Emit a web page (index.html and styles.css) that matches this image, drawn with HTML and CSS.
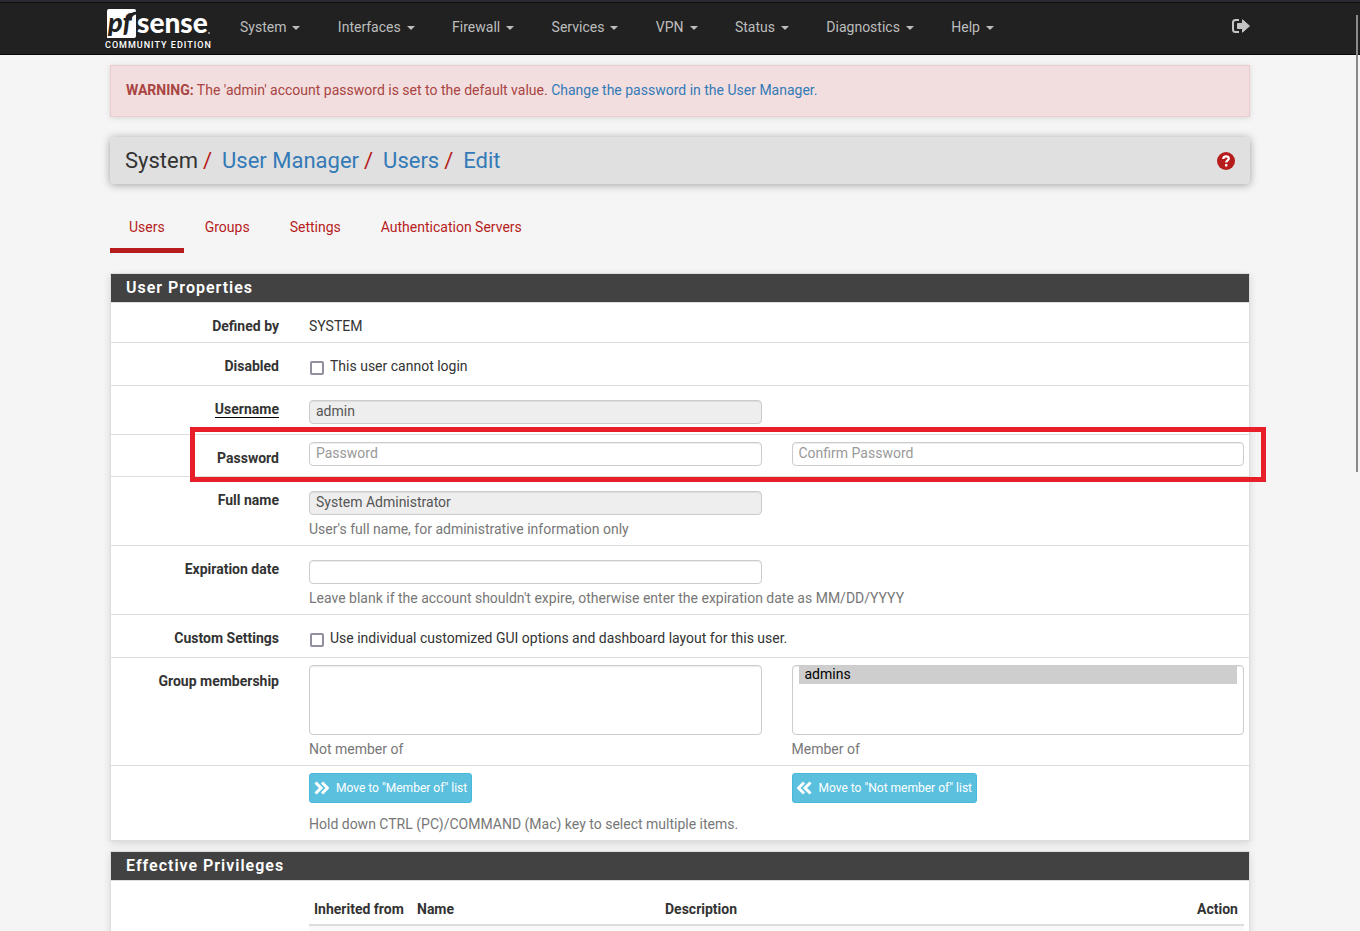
FILE: index.html
```html
<!DOCTYPE html>
<html lang="en">
<head>
<meta charset="utf-8">
<title>System: User Manager: Users: Edit</title>
<link rel="stylesheet" href="styles.css">
</head>
<body>
<header class="topbar">
  <div class="container topbar-inner">
    <a class="brand" href="#" aria-label="pfSense Community Edition">
      <svg class="brand-logo" width="106" height="36" viewBox="0 -4 106 36">
        <path fill="#fff" d="M2 0H27Q29 0 29 2V27Q29 29 27 29H0V2Q0 0 2 0Z"/>
        <text class="logo-pf" x="1" y="23">pf</text>
        <path fill="none" stroke="#212121" stroke-width="3" d="M23 10Q24 4 30 4"/>
        <text class="logo-sense" x="30" y="24">sense</text>
        <circle cx="102" cy="24" r="1" fill="#aaa"/>
      </svg>
      <span class="brand-edition">COMMUNITY EDITION</span>
    </a>
    <nav class="menu">
      <a href="#">System<i class="caret"></i></a>
      <a href="#">Interfaces<i class="caret"></i></a>
      <a href="#">Firewall<i class="caret"></i></a>
      <a href="#">Services<i class="caret"></i></a>
      <a href="#">VPN<i class="caret"></i></a>
      <a href="#">Status<i class="caret"></i></a>
      <a href="#">Diagnostics<i class="caret"></i></a>
      <a href="#">Help<i class="caret"></i></a>
    </nav>
    <a class="logout" href="#" aria-label="Logout">
      <svg width="18" height="14" viewBox="0 0 18 14"><path fill="none" stroke="#c4c4c4" stroke-width="2" d="M7 1H3.500Q1 1 1 3.500V10.500Q1 13 3.500 13H7"/><path fill="#c4c4c4" stroke="#c4c4c4" stroke-linejoin="round" d="M5.500 4.500H10.500V.8L17.500 7L10.500 13.200V9.500H5.500Z"/></svg>
    </a>
  </div>
</header>

<main class="container">
  <div class="alert"><strong>WARNING:</strong> The 'admin' account password is set to the default value. <a href="#">Change the password in the User Manager.</a></div>

  <div class="page-header">
    <ol class="breadcrumb">
      <li>System</li>
      <li><a href="#">User Manager</a></li>
      <li><a href="#">Users</a></li>
      <li><a href="#">Edit</a></li>
    </ol>
    <a class="help-link" href="#" aria-label="Help">
      <svg width="18" height="18" viewBox="0 0 18 18"><circle cx="9" cy="9" r="9" fill="#b71c1c"/><path d="M6.200 7C6.300 5.200 7.300 4.300 9 4.300C10.800 4.300 11.800 5.300 11.800 6.600C11.800 8.500 9.200 8.500 9.200 10.600" fill="none" stroke="#fff" stroke-width="2.200"/><rect x="8" y="12" width="2.400" height="2.400" rx=".5" fill="#fff"/></svg>
    </a>
  </div>

  <nav class="tabs">
    <a class="active" href="#">Users</a>
    <a href="#">Groups</a>
    <a href="#">Settings</a>
    <a href="#">Authentication Servers</a>
  </nav>

  <form>
    <section class="panel">
      <h2>User Properties</h2>
      <div class="row">
        <span class="label">Defined by</span>
        <div class="field text">SYSTEM</div>
      </div>
      <div class="row">
        <span class="label">Disabled</span>
        <div class="field check"><label><input type="checkbox">This user cannot login</label></div>
      </div>
      <div class="row">
        <label class="label" for="username"><span class="required">Username</span></label>
        <div class="field"><input class="control" id="username" type="text" value="admin" readonly></div>
      </div>
      <div class="row marked">
        <label class="label" for="password">Password</label>
        <div class="field tight"><input class="control" id="password" type="password" placeholder="Password"></div>
        <div class="field tight"><input class="control" type="password" placeholder="Confirm Password" aria-label="Confirm Password"></div>
        <div class="highlight"></div>
      </div>
      <div class="row">
        <label class="label" for="fullname">Full name</label>
        <div class="field helped"><input class="control" id="fullname" type="text" value="System Administrator" readonly><p class="help">User's full name, for administrative information only</p></div>
      </div>
      <div class="row">
        <label class="label" for="expires">Expiration date</label>
        <div class="field helped"><input class="control" id="expires" type="text"><p class="help">Leave blank if the account shouldn't expire, otherwise enter the expiration date as MM/DD/YYYY</p></div>
      </div>
      <div class="row">
        <span class="label">Custom Settings</span>
        <div class="field check"><label><input type="checkbox">Use individual customized GUI options and dashboard layout for this user.</label></div>
      </div>
      <div class="row">
        <span class="label">Group membership</span>
        <div class="field tight helped"><select class="control list" id="notmember" multiple></select><label class="help" for="notmember">Not member of</label></div>
        <div class="field tight helped"><select class="control list" id="member" multiple><option selected>admins</option></select><label class="help" for="member">Member of</label></div>
      </div>
      <div class="row">
        <span class="label"></span>
        <div class="field tight helped">
          <button class="move" type="button"><svg width="15" height="14" viewBox="0 0 15 14"><path d="M1.500 1.500L7 7L1.500 12.500M8 1.500L13.500 7L8 12.500" fill="none" stroke="#fff" stroke-width="3"/></svg>Move to "Member of" list</button>
          <p class="help note">Hold down CTRL (PC)/COMMAND (Mac) key to select multiple items.</p>
        </div>
        <div class="field tight helped">
          <button class="move" type="button"><svg width="15" height="14" viewBox="0 0 15 14"><path d="M13.500 1.500L8 7L13.500 12.500M7 1.500L1.500 7L7 12.500" fill="none" stroke="#fff" stroke-width="3"/></svg>Move to "Not member of" list</button>
        </div>
      </div>
    </section>

    <section class="panel">
      <h2>Effective Privileges</h2>
      <div class="row">
        <span class="label"></span>
        <div class="field full">
          <table>
            <thead><tr><th class="c-from">Inherited from</th><th class="c-name">Name</th><th>Description</th><th class="c-action">Action</th></tr></thead>
            <tbody><tr><td colspan="4"></td></tr></tbody>
          </table>
        </div>
      </div>
    </section>
  </form>
</main>
<div class="scroll-thumb"></div>
</body>
</html>
```
FILE: styles.css
```css
* { box-sizing: border-box; }
html { height: 100%; overflow: hidden; }
body {
  height: 100%;
  margin: 0;
  overflow: hidden;
  background: #f5f5f5;
  color: #333;
  font: 14px/19px Roboto, sans-serif;
}
a { color: #337ab7; text-decoration: none; }
p { margin: 0; }
.container { max-width: 1140px; margin: 0 auto; }

.topbar {
  height: 55px;
  background: #212121;
  border-top: 2px solid #2b2a33;
  border-bottom: 1px solid #080808;
  box-shadow: inset 0 1px #0c0c0d;
}
.topbar-inner { display: flex; }
.brand {
  width: 135px;
  margin-left: -5px;
  padding-top: 3px;
  color: #fff;
}
.brand-logo { display: block; margin: 0 0 -2px 2px; overflow: visible; }
.brand-edition { display: block; font-size: 9px; line-height: 12px; font-weight: 500; letter-spacing: 1px; white-space: nowrap; }
.logo-pf { font: italic 900 27px Lato, sans-serif; fill: #212121; }
.logo-sense { font: 900 28px Lato, sans-serif; fill: #fff; }
.menu { display: flex; justify-content: space-between; width: 754px; }
.menu a { color: #bdbdbd; display: flex; align-items: center; gap: 6px; height: 51px; }
.caret { border: 4px solid transparent; border-top-color: currentColor; border-bottom: 0; }
.logout { margin-left: auto; padding-top: 17px; }

.alert {
  margin: 10px 0 20px;
  padding: 15px 15px 16px;
  border: 1px solid #ebccd1;
  background: #f2dede;
  color: #a94442;
  box-shadow: 0 1px 6px rgba(0, 0, 0, .12);
}
.page-header {
  display: flex;
  align-items: center;
  justify-content: space-between;
  height: 47px;
  padding: 0 15px;
  border-radius: 4px;
  background: #e0e0e0;
  box-shadow: 0 1px 8px rgba(0, 0, 0, .35);
}
.breadcrumb { display: flex; margin: 0; padding: 0; list-style: none; font-size: 22px; line-height: 30px; }
.breadcrumb li + li::before { content: "/"; padding: 0 10px 0 5px; color: #b71c1c; }
.help-link { display: flex; }
.tabs { display: flex; gap: 2px; margin: 20px 0; }
.tabs a { padding: 14px 19px 11px; border-bottom: 5px solid transparent; color: #b71c1c; }
.tabs .active { border-color: #b71c1c; }

.panel {
  margin-bottom: 10px;
  border: 1px solid #ddd;
  background: #fff;
  box-shadow: 0 3px 8px rgba(0, 0, 0, .12);
}
.panel h2 {
  margin: 0;
  padding: 4px 15px;
  border-bottom: 1px solid #ddd;
  background: #424242;
  color: #fff;
  font-size: 16px;
  line-height: 20px;
  font-weight: 600;
  letter-spacing: 1px;
}
.row {
  display: grid;
  grid-template-columns: 168px minmax(0, 1fr) minmax(0, 1fr);
  column-gap: 30px;
  padding-right: 5px;
  border-bottom: 1px solid #ddd;
}
.row:last-child { border-bottom: 0; }
.label { padding-top: 14px; text-align: right; font-weight: 700; }
.required { border-bottom: 1px solid #000; }
.field { padding: 14px 0 10px; }
.text { padding-bottom: 6px; }
.tight { padding-top: 7px; }
.helped { padding-bottom: 6px; }
.check { grid-column: 2 / 4; padding-bottom: 9px; }
.check label { display: flex; align-items: center; gap: 6px; }
.check input {
  appearance: none;
  width: 14px;
  height: 14px;
  margin: 3px 0 0 1px;
  border: 2px solid #8f8f9d;
  border-radius: 2px;
  background: #fff;
}
.check input:checked { background: #337ab7; }
.control {
  display: block;
  width: 100%;
  height: 24px;
  padding: 0 6px 2px;
  border: 1px solid #ccc;
  border-radius: 4px;
  background: #fff;
  color: #555;
  font: inherit;
  outline: 0;
  box-shadow: inset 0 1px 1px rgba(0, 0, 0, .075);
}
.control[readonly] { background: #eee; }
.control::placeholder { color: #999; }
.list { height: 70px; padding: 0 6px; overflow: hidden; }
.list option { height: 18px; min-height: 0; padding: 0 6px; line-height: 18px; color: #000; }
.help { display: block; margin-top: 5px; color: #777; white-space: nowrap; }
.note { margin-top: 12px; }
.move {
  display: flex;
  align-items: center;
  gap: 7px;
  height: 30px;
  padding: 0 4px;
  border: 1px solid #46b8da;
  border-radius: 3px;
  background: #5bc0de;
  color: #fff;
  font: 12px/18px Roboto, sans-serif;
}
.marked { position: relative; }
.highlight {
  position: absolute;
  inset: -8px -17px -6px 79px;
  border: 5px solid #e81e28;
  pointer-events: none;
}
.full { grid-column: 2 / 4; padding: 13px 0 0; }
table { width: 100%; border-collapse: collapse; table-layout: fixed; }
th { padding: 6px 5px 5px; border-bottom: 2px solid #ddd; text-align: left; font-weight: 700; white-space: nowrap; }
td { height: 30px; background: #f9f9f9; }
.c-from { width: 103px; }
.c-name { width: 248px; }
.c-action { width: 52px; }
.scroll-thumb {
  position: fixed;
  top: 15px;
  right: 2px;
  width: 2px;
  height: 457px;
  background: #8a8a8a;
}
```
